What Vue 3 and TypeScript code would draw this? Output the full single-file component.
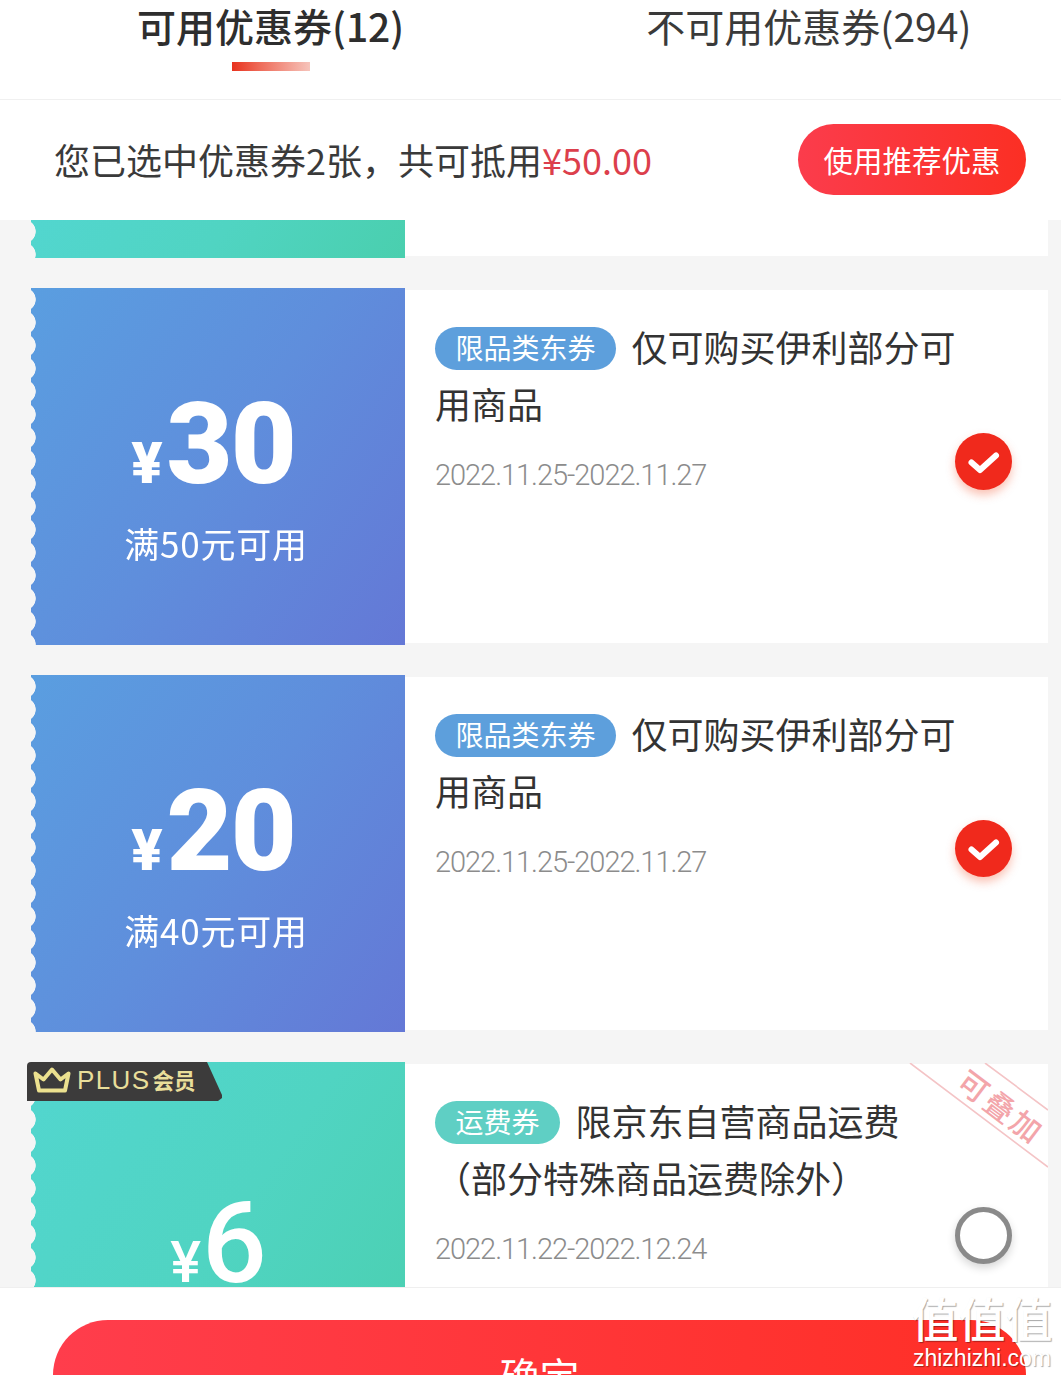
<script setup lang="ts">
type Tone = 'blue' | 'green'

interface Coupon {
  id: number
  tone: Tone
  amount: string
  threshold?: string
  tag: string
  title: string
  dates: string
  checked: boolean
  plus?: boolean
  stackable?: boolean
}

const coupons: Coupon[] = [
  {
    id: 1,
    tone: 'blue',
    amount: '30',
    threshold: '满50元可用',
    tag: '限品类东券',
    title: '仅可购买伊利部分可用商品',
    dates: '2022.11.25-2022.11.27',
    checked: true,
  },
  {
    id: 2,
    tone: 'blue',
    amount: '20',
    threshold: '满40元可用',
    tag: '限品类东券',
    title: '仅可购买伊利部分可用商品',
    dates: '2022.11.25-2022.11.27',
    checked: true,
  },
  {
    id: 3,
    tone: 'green',
    amount: '6',
    tag: '运费券',
    title: '限京东自营商品运费（部分特殊商品运费除外）',
    dates: '2022.11.22-2022.12.24',
    checked: false,
    plus: true,
    stackable: true,
  },
]
</script>

<template>
  <div class="page">
    <header class="tabs">
      <div class="tab tab--active">
        <span>可用优惠券(12)</span>
        <i class="tab-bar"></i>
      </div>
      <div class="tab"><span>不可用优惠券(294)</span></div>
    </header>

    <section class="summary">
      <p class="summary-text">您已选中优惠券2张，共可抵用<em>¥50.00</em></p>
      <button class="recommend" type="button">使用推荐优惠</button>
    </section>

    <main class="list">
      <!-- tail of the coupon scrolled under the summary bar -->
      <div class="card card--tail">
        <div class="stub"><div class="stub-face stub-face--green"></div></div>
        <div class="body"></div>
      </div>

      <article v-for="c in coupons" :key="c.id" class="card">
        <div class="stub">
          <div class="stub-face" :class="`stub-face--${c.tone}`">
            <div class="amount" :class="{ 'amount--plain': c.plus }">
              <span class="yen">¥</span><span class="value">{{ c.amount }}</span>
            </div>
            <div v-if="c.threshold" class="threshold">{{ c.threshold }}</div>
          </div>
          <div v-if="c.plus" class="plus-badge">
            <svg class="crown" viewBox="0 0 38 26" width="38" height="26" aria-hidden="true">
              <path d="M2.5 6.5 10.5 12.5 19 2.5 27.5 12.5 35.5 6.5 32 23.5H6Z" />
            </svg>
            <span class="plus-word">PLUS</span><b class="plus-member">会员</b>
          </div>
        </div>

        <div class="body">
          <div class="info">
            <div class="title">
              <span class="tag" :class="`tag--${c.tone}`">{{ c.tag }}</span>{{ c.title }}
            </div>
            <div class="dates">{{ c.dates }}</div>
          </div>
          <span class="mark" :class="{ 'mark--on': c.checked }">
            <svg v-if="c.checked" viewBox="0 0 57 57" width="57" height="57" aria-hidden="true">
              <path d="M16.5 29.5 25 37 41 22.5" />
            </svg>
          </span>
          <svg v-if="c.stackable" class="ribbon" viewBox="0 0 140 106" width="140" height="106">
            <path d="M2 0 140 104M77 0 140 47" />
            <text x="0" y="0" transform="translate(94 43) rotate(37)" text-anchor="middle" dominant-baseline="central">可叠加</text>
          </svg>
        </div>
      </article>
    </main>

    <footer class="footer">
      <button class="confirm" type="button">确定</button>
    </footer>

    <div class="watermark">
      <span class="watermark-mark">值值值</span>
      <span class="watermark-url">zhizhizhi.com</span>
    </div>
  </div>
</template>

<style>
html,
body {
  margin: 0;
  background: #fff;
}
</style>

<style scoped>
.page {
  position: relative;
  display: flex;
  flex-direction: column;
  width: 1061px;
  height: 1375px;
  overflow: hidden;
  background: #fff;
  color: #333;
  font-family: 'Noto Sans CJK SC', 'Noto Sans', sans-serif;
}

/* tabs */
.tabs {
  display: flex;
  flex: none;
  gap: 242px;
  box-sizing: border-box;
  height: 100px;
  padding-left: 137px;
  border-bottom: 1px solid #f0f0f0;
}
.tab {
  display: flex;
  flex-direction: column;
  align-items: center;
  font-size: 39px;
  line-height: 50px;
  color: #3a3a3a;
}
.tab--active {
  font-weight: 500;
  color: #2e2e2e;
}
.tab-bar {
  width: 78px;
  height: 9px;
  margin-top: 12px;
  background: linear-gradient(90deg, #e8321e 0%, #ee6a58 35%, #f6c4bb 100%);
}

/* selected total */
.summary {
  display: flex;
  flex: none;
  align-items: center;
  justify-content: space-between;
  box-sizing: border-box;
  height: 120px;
  padding: 0 35px 0 54px;
}
.summary-text {
  margin: 0 0 2px;
  font-size: 36px;
  line-height: 50px;
  color: #3a3a3a;
}
.summary-text em {
  font-style: normal;
  color: #dc3f4c;
}
.recommend {
  width: 228px;
  height: 71px;
  margin-top: -1px;
  padding: 0;
  border: 0;
  border-radius: 36px;
  background: linear-gradient(90deg, #fb3c4c 0%, #fb2f24 100%);
  color: #fff;
  font-family: inherit;
  font-size: 29.5px;
  line-height: 69px;
}

/* coupon list */
.list {
  flex: 1;
  min-height: 0;
  overflow: hidden;
  padding-left: 31px;
  background: #f5f5f5;
}
.card {
  display: flex;
  width: 1017px;
  height: 357px;
  margin-bottom: 30px;
}
.card--tail {
  height: 38px;
}

.stub {
  position: relative;
  flex: none;
  width: 374px;
}
.stub-face {
  display: flex;
  flex-direction: column;
  align-items: center;
  height: 100%;
  padding: 97px 4px 0 0;
  box-sizing: border-box;
  color: #fff;
  /* scalloped perforation down the left edge */
  -webkit-mask:
    radial-gradient(circle 12px at -7px 11.5px, transparent 11.4px, #000 12px) 0 0 / 24px 23px repeat-y,
    linear-gradient(#000, #000) 5px 0 / 100% 100% no-repeat;
  mask:
    radial-gradient(circle 12px at -7px 11.5px, transparent 11.4px, #000 12px) 0 0 / 24px 23px repeat-y,
    linear-gradient(#000, #000) 5px 0 / 100% 100% no-repeat;
}
.card--tail .stub-face {
  padding: 0;
}
.stub-face--blue {
  background: linear-gradient(125deg, #5a9ee0 0%, #5f8edc 50%, #6478d6 100%);
}
.stub-face--green {
  background: linear-gradient(125deg, #52d6cf 0%, #50d4c2 50%, #4acfae 100%);
}

.amount {
  display: flex;
  align-items: flex-end;
  height: 118px;
  margin-right: 6px;
  line-height: 1;
}
.yen {
  margin-right: 4px;
  margin-bottom: 11px;
  font-family: Roboto, sans-serif;
  font-size: 58px;
  font-weight: 900;
  line-height: 58px;
}
.value {
  font-family: Roboto, sans-serif;
  font-size: 114px;
  font-weight: 900;
  line-height: 118px;
  letter-spacing: -2px;
}
.amount--plain {
  margin-top: 25px;
  margin-right: 0;
  margin-left: 3px;
}
.amount--plain .yen {
  margin-right: 1px;
  font-weight: 500;
}
.amount--plain .value {
  font-weight: 500;
}
.threshold {
  margin-top: 15px;
  font-size: 35px;
  line-height: 50px;
  letter-spacing: 0.8px;
}

/* PLUS member flag */
.plus-badge {
  position: absolute;
  top: 0;
  left: -4px;
  display: flex;
  align-items: center;
  width: 195px;
  height: 39px;
  box-sizing: border-box;
  padding: 0 0 3px 6px;
  background: #3c3b3b;
  border-radius: 4px 0 0 0;
  clip-path: polygon(0 0, 180px 0, 195px 33px, 195px 36px, 191px 39px, 0 39px);
  color: #e9de9a;
}
.crown {
  flex: none;
}
.crown path {
  fill: none;
  stroke: #ece18f;
  stroke-width: 4;
  stroke-linejoin: round;
}
.plus-word {
  margin-left: 6px;
  font-family: 'Liberation Sans', sans-serif;
  font-size: 26px;
  letter-spacing: 1.4px;
  line-height: 36px;
}
.plus-member {
  margin-left: 2px;
  font-size: 21.5px;
  line-height: 36px;
}

/* coupon details */
.body {
  position: relative;
  display: flex;
  flex: 1;
  align-items: flex-start;
  margin: 2px 0;
  padding-left: 30px;
  background: #fff;
}
.card--tail .body {
  margin-top: 0;
}
.info {
  flex: none;
  width: 525px;
  padding-top: 28px;
}
.title {
  font-size: 36px;
  line-height: 57px;
  color: #333;
}
.tag {
  display: inline-block;
  height: 43px;
  margin-right: 15.5px;
  padding: 0 20.5px;
  border-radius: 22px;
  color: #fff;
  font-size: 28px;
  line-height: 41px;
  vertical-align: 3px;
}
.tag--blue {
  background: #5d9fdc;
}
.tag--green {
  background: #5fcfc4;
}
.dates {
  margin-top: 23px;
  font-family: Roboto, sans-serif;
  font-size: 29px;
  font-weight: 300;
  line-height: 40px;
  letter-spacing: -1.05px;
  color: #8c8c8c;
}

/* selection mark */
.mark {
  flex: none;
  width: 57px;
  height: 57px;
  box-sizing: border-box;
  margin: 143px 0 0 -5px;
  border: 5px solid #8a8a8a;
  border-radius: 50%;
  background: #fff;
  box-shadow: 0 4px 8px rgba(0, 0, 0, 0.16);
}
.mark--on {
  border: 0;
  background: #f0291c;
  box-shadow: 0 5px 10px rgba(240, 80, 40, 0.35);
}
.mark svg {
  display: block;
}
.mark path {
  fill: none;
  stroke: #fff;
  stroke-width: 6;
  stroke-linecap: round;
  stroke-linejoin: round;
}

/* stackable corner ribbon */
.ribbon {
  position: absolute;
  top: -1px;
  right: 0;
}
.ribbon path {
  fill: none;
  stroke: #f4c4c6;
  stroke-width: 1.6;
}
.ribbon text {
  fill: #f3a5aa;
  font-family: 'Noto Sans CJK SC', sans-serif;
  font-size: 30px;
  font-weight: 500;
  letter-spacing: 3px;
}

/* confirm bar */
.footer {
  flex: none;
  box-sizing: border-box;
  height: 88px;
  padding: 32px 35px 0 53px;
  border-top: 1px solid #efefef;
}
.confirm {
  display: block;
  width: 100%;
  height: 110px;
  padding: 0;
  border: 0;
  border-radius: 55px;
  background: linear-gradient(90deg, #ff3d4c 0%, #ff2f26 100%);
  color: #fff;
  font-family: inherit;
  font-size: 40px;
  line-height: 110px;
}

/* site stamp over the corner */
.watermark {
  position: absolute;
  right: 9px;
  bottom: 6px;
  display: flex;
  flex-direction: column;
  align-items: center;
  width: 140px;
  color: #fff;
  text-shadow: 1px 1px 1px rgba(0, 0, 0, 0.35);
  pointer-events: none;
}
.watermark-mark {
  font-size: 47px;
  font-weight: 500;
  line-height: 52px;
  white-space: nowrap;
}
.watermark-url {
  margin-top: 4px;
  font-family: 'Liberation Sans', sans-serif;
  font-size: 23px;
  line-height: 22px;
  white-space: nowrap;
}
</style>
